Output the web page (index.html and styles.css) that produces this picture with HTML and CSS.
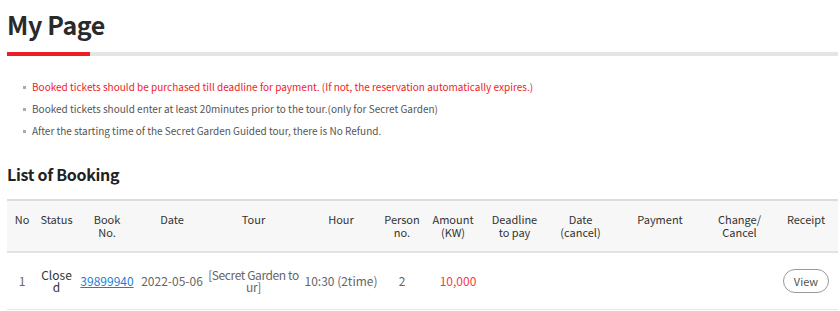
FILE: index.html
```html
<!DOCTYPE html>
<html lang="en">
<head>
  <meta charset="UTF-8" />
  <title>My Page</title>
  <link rel="stylesheet" href="styles.css">
</head>
<body>
  <div class="page">
    <h1 class="page-title">My Page</h1>
    <div class="title-bar"><span class="title-bar-on"></span></div>

    <ul class="notice">
      <li class="warn">Booked tickets should be purchased till deadline for payment. (If not, the reservation automatically expires.)</li>
      <li>Booked tickets should enter at least 20minutes prior to the tour.(only for Secret Garden)</li>
      <li>After the starting time of the Secret Garden Guided tour, there is No Refund.</li>
    </ul>

    <h2 class="section-title">List of Booking</h2>

    <table class="booking">
      <colgroup>
        <col style="width:30px">
        <col style="width:39px">
        <col style="width:62px">
        <col style="width:68px">
        <col style="width:95px">
        <col style="width:80px">
        <col style="width:42px">
        <col style="width:60px">
        <col style="width:63px">
        <col style="width:69px">
        <col style="width:90px">
        <col style="width:69px">
        <col style="width:64px">
      </colgroup>
      <thead>
        <tr>
          <th>No</th>
          <th>Status</th>
          <th>Book<br>No.</th>
          <th>Date</th>
          <th>Tour</th>
          <th>Hour</th>
          <th>Person<br>no.</th>
          <th>Amount<br>(KW)</th>
          <th>Deadline<br>to pay</th>
          <th>Date<br>(cancel)</th>
          <th>Payment</th>
          <th>Change/<br>Cancel</th>
          <th>Receipt</th>
        </tr>
      </thead>
      <tbody>
        <tr>
          <td>1</td>
          <td class="status">Closed</td>
          <td><a href="#" class="book-link">39899940</a></td>
          <td>2022-05-06</td>
          <td class="tour">[Secret Garden tour]</td>
          <td>10:30 (2time)</td>
          <td>2</td>
          <td class="amount">10,000</td>
          <td></td>
          <td></td>
          <td></td>
          <td></td>
          <td><button class="btn-view">View</button></td>
        </tr>
      </tbody>
    </table>
  </div>
</body>
</html>
```

FILE: styles.css
```css
body {
  margin: 0;
  background-color: #fff;
  color: #333;
  font-family: 'Noto Sans CJK KR', 'Noto Sans', sans-serif;
}

.page {
  padding: 0 2px 0 7px;
}

.page-title {
  margin: 0;
  padding-top: 6px;
  font-size: 25px;
  line-height: 36px;
  font-weight: 700;
  color: #2a2a2a;
  letter-spacing: -0.4px;
}

.title-bar {
  margin-top: 10px;
  height: 4px;
  background-color: #e5e5e5;
}

.title-bar-on {
  display: block;
  width: 83px;
  height: 4px;
  background-color: #ee1c25;
}

.notice {
  list-style: none;
  margin: 20px 0 0;
  padding: 0 0 0 15px;
}

.notice li {
  position: relative;
  padding-left: 10px;
  font-size: 10px;
  line-height: 22px;
  color: #555;
}

.notice li::before {
  content: '';
  position: absolute;
  left: 1px;
  top: 10px;
  width: 3px;
  height: 3px;
  background-color: #aaa;
}

.notice li.warn {
  color: #ee1c25;
}

.section-title {
  margin: 19px 0 0;
  font-size: 16px;
  line-height: 26px;
  font-weight: 700;
  color: #222;
  letter-spacing: -0.3px;
}

.booking {
  margin-top: 12px;
  width: 100%;
  table-layout: fixed;
  border-collapse: collapse;
  border-top: 2px solid #dcdcdc;
  font-size: 12px;
}

.booking th {
  padding: 12px 2px;
  background-color: #f7f7f7;
  border-bottom: 2px solid #e2e2e2;
  font-size: 11px;
  font-weight: 400;
  line-height: 13px;
  color: #333;
  text-align: center;
  vertical-align: top;
}

.booking td {
  padding: 16px 2px;
  line-height: 12px;
  border-bottom: 1px solid #e5e5e5;
  text-align: center;
  color: #666;
  word-break: break-all;
}

.booking td.status {
  color: #333;
  padding: 16px 3px;
}

.booking td.tour {
  padding: 16px 0;
  letter-spacing: -0.4px;
}

.book-link {
  color: #1a7ed6;
  text-decoration: underline;
}

.booking td.amount {
  padding-left: 12px;
  color: #f23a47;
}

.btn-view {
  width: 46px;
  height: 24px;
  padding: 0;
  border: 1px solid #999;
  border-radius: 12px;
  background-color: #fff;
  color: #555;
  font-family: inherit;
  font-size: 11px;
}
```
